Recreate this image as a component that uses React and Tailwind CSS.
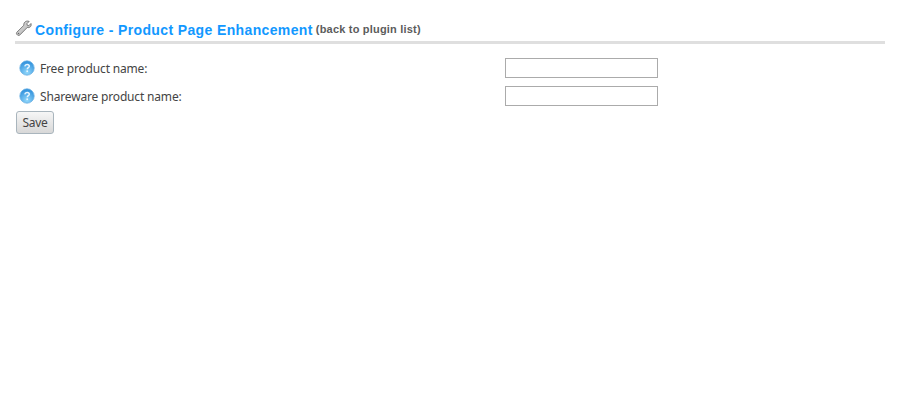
export default function App() {
  const rows = ["Free product name:", "Shareware product name:"];
  return (
    <div className="min-h-[400px] bg-white px-[15px] pt-[19px] font-['Liberation_Sans',sans-serif]">
      <div className="flex h-[22px] items-center">
        <svg width="17" height="17" viewBox="0 0 18 18" className="mr-[3px] mt-[-4px] shrink-0">
          <defs>
            <linearGradient id="w" x1="0" y1="0" x2="1" y2="1">
              <stop offset="0" stopColor="#e8e8e8" />
              <stop offset="1" stopColor="#a8a8a8" />
            </linearGradient>
          </defs>
          <path d="M12 1.300c1-.3 2.100-.2 3 .2l-2.400 2.400.4 1.700 1.700.4 2.200-2.300c.4 1.100.3 2.300-.4 3.200-.9 1.100-2.300 1.400-3.500 1L5.200 15.800c-.8.8-1.900.8-2.600.1l-.6-.6c-.7-.8-.6-1.800.1-2.500l7.300-7.200c-.4-1.900.6-3.600 2.600-4.300z" fill="url(#w)" stroke="#6a6a6a" strokeWidth="0.9" />
          <circle cx="3.700" cy="14.300" r="0.800" fill="#666666" />
        </svg>
        <h1 className="text-[14px] font-bold leading-[22px] tracking-[0.37px] text-[#1298ff]">Configure - Product Page Enhancement</h1>
        <a className="ml-[3px] mt-[-2px] text-[11px] font-bold leading-[22px] tracking-[0.2px] text-[#5c5c5c]">(back to plugin list)</a>
      </div>
      <div className="h-[3px] bg-[#dfdfdf]" />
      <div className="mt-[14px] flex flex-col gap-[8px]">
        {rows.map((r) => (
          <div key={r} className="flex h-[20px] items-center">
            <svg width="16" height="16" viewBox="0 0 16 16" className="ml-[4px] mr-[5px] shrink-0">
              <defs>
                <radialGradient id={"q" + r.length} cx="0.5" cy="0.8" r="0.75">
                  <stop offset="0" stopColor="#93d8fb" />
                  <stop offset="1" stopColor="#2f90dc" />
                </radialGradient>
              </defs>
              <circle cx="8" cy="8" r="7.200" fill={"url(#q" + r.length + ")"} stroke="#6db3e3" strokeWidth="0.800" />
              <path d="M5.800 6.300c.2-1.300 1.100-1.900 2.300-1.900 1.300 0 2.200.7 2.200 1.800 0 1.500-2 1.500-2 3" fill="none" stroke="#e8f6ff" strokeWidth="1.500" />
              <rect x="7.400" y="10.400" width="1.600" height="1.600" fill="#e8f6ff" />
            </svg>
            <span className="mt-[2px] w-[465px] shrink-0 font-['Noto_Sans',sans-serif] text-[12px] tracking-[-0.17px] text-[#444444]">{r}</span>
            <input className="box-border h-[20px] w-[153px] border border-[#ababab] bg-white outline-none" />
          </div>
        ))}
      </div>
      <button className="ml-[1px] mt-[5px] block h-[23px] w-[38px] rounded-[3px] border border-[#a9b5bd] bg-gradient-to-b from-[#f6f6f6] to-[#d8d8d8] font-['Noto_Sans',sans-serif] text-[12px] tracking-[-0.3px] text-[#444444]">Save</button>
    </div>
  );
}
